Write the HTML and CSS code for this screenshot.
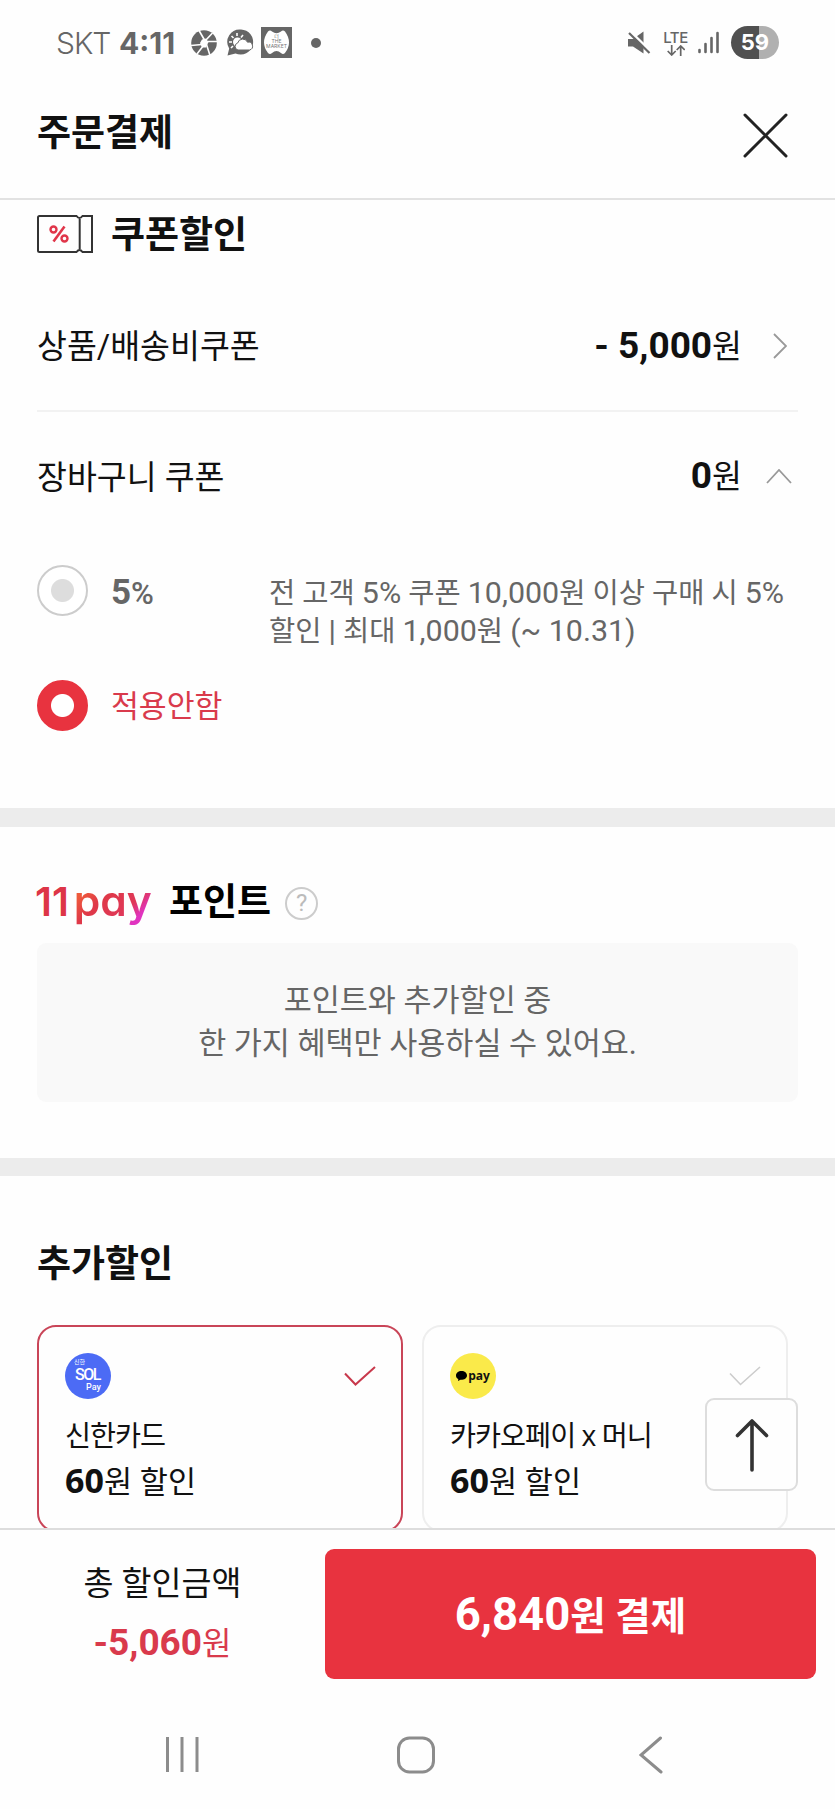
FILE: index.html
```html
<!DOCTYPE html>
<html lang="ko">
<head>
  <meta charset="UTF-8" />
  <meta name="viewport" content="width=device-width, initial-scale=1.0"/>
  <title>주문결제</title>
  <link rel="stylesheet" href="styles.css">
</head>
<body>
  <div class="screen">
    <!-- 상태바 -->
    <div class="status-bar">
      <span class="carrier">SKT</span>
      <span class="clock">4:11</span>
      <svg class="st-shutter" width="26" height="26" viewBox="0 0 26 26">
        <circle cx="13" cy="13" r="12.8" fill="#666"/>
        <g stroke="#fff" stroke-width="1.6" fill="none">
          <path d="M8 0.500L13.500 10M21.500 3L14.500 10.500M26 11.500L15 11.500M19 25.500L15.500 14.500M6 24L12.500 15.500M0 15.500L11 14.500"/>
        </g>
        <path d="M14.500 8.500L17.500 12L15 17.500L11 17.500L9 13L11 9.500Z" fill="#fff"/>
      </svg>
      <svg class="st-weather" width="27" height="27" viewBox="0 0 27 27">
        <path d="M14 0.5A12.5 12.5 0 1 1 8.5 24.4L0.5 26.5L2.2 19.5A12.5 12.5 0 0 1 14 .5Z" fill="#666"/>
        <circle cx="10.5" cy="13" r="4.5" fill="#fff"/>
        <path d="M10 4v3M4.500 7l2 2M2 13h3M16 6l-2 2.500M4 19l2-2" stroke="#fff" stroke-width="1.6"/>
        <path d="M11 21a3.600 3.600 0 0 1-.3-7a5.200 5.200 0 0 1 9.800-.8a4 4 0 0 1 2 7.800Z" fill="#fff" stroke="#666" stroke-width="1"/>
      </svg>
      <svg class="st-market" width="31" height="31" viewBox="0 0 31 31">
        <rect width="31" height="31" fill="#666"/>
        <path d="M7 4.500Q9 2.500 11 4.500Q15.500 8 20 4.500Q22 2.500 24 4.500Q32 15.500 24 26Q22 28 20 26Q15.500 22 11 26Q9 28 7 26Q-1 15.500 7 4.500Z" fill="#fff"/>
        <text x="15.500" y="10.800" class="market-text">더</text>
        <text x="15.500" y="16.200" class="market-text">THE</text>
        <text x="15.500" y="21" class="market-text">MARKET</text>
      </svg>
      <span class="dot"></span>

      <svg class="st-mute" width="24" height="24" viewBox="0 0 24 24">
        <path d="M1 8h5l10.500-7.500v22L6 15.500H1z" fill="#666"/>
        <path d="M3 0L25 21.500" stroke="#fff" stroke-width="2.500"/>
        <path d="M2 2L22.500 22" stroke="#666" stroke-width="2.200"/>
      </svg>
      <div class="lte">
        <span>LTE</span>
        <svg width="18" height="11" viewBox="0 0 18 11" fill="none" stroke="#666" stroke-width="1.700">
          <path d="M4.700 0v10M.7 6l4 4l4-4M13.700 11V1M9.700 5l4-4l4 4"/>
        </svg>
      </div>
      <svg class="st-signal" width="21" height="23" viewBox="0 0 21 23" stroke="#666" stroke-width="2.600" stroke-linecap="round">
        <path d="M1.500 19v2M7.500 13v8M13.500 7v14M19.500 2v19"/>
      </svg>
      <span class="battery">59</span>
    </div>

    <!-- 헤더 -->
    <header class="header">
      <h1>주문결제</h1>
      <svg width="45" height="45" viewBox="0 0 45 45" stroke="#222" stroke-width="3" stroke-linecap="round">
        <path d="M2 2L43 43M43 2L2 43"/>
      </svg>
    </header>

    <main class="content">
      <!-- 쿠폰할인 -->
      <section class="coupon">
        <div class="coupon-title">
          <svg width="56" height="38" viewBox="0 0 56 38" fill="none" stroke="#333" stroke-width="2">
            <path d="M2.500 1H39.500Q42.500 5 45.500 1H55V37H45.500Q42.500 33 39.500 37H2.500Q1 37 1 35.500V2.500Q1 1 2.500 1Z"/>
            <path d="M42.700 4V34"/>
            <g stroke="#e0364a" stroke-width="2.400">
              <circle cx="16.500" cy="14.500" r="3"/>
              <circle cx="27.500" cy="23.500" r="3"/>
              <path d="M27.500 11.500L16.500 26.500" stroke-width="2.600"/>
            </g>
          </svg>
          <h2>쿠폰할인</h2>
        </div>

        <div class="row">
          <span class="row-name">상품/배송비쿠폰</span>
          <span class="price"><b>- 5,000</b>원</span>
          <svg class="arrow-right" width="14" height="26" viewBox="0 0 14 26" fill="none" stroke="#999" stroke-width="1.800">
            <path d="M1 1L13 13L1 25"/>
          </svg>
        </div>
        <div class="row row-cart">
          <span class="row-name">장바구니 쿠폰</span>
          <span class="price"><b>0</b>원</span>
          <svg class="arrow-up" width="26" height="15" viewBox="0 0 26 15" fill="none" stroke="#999" stroke-width="1.800">
            <path d="M1 14L13 1L25 14"/>
          </svg>
        </div>

        <div class="option">
          <span class="radio"></span>
          <span class="rate"><b>5</b>%</span>
          <p class="desc">전 고객 <i>5%</i> 쿠폰 <i>10,000</i>원 이상 구매 시 <i>5%</i><br>할인 <i>|</i> 최대 <i>1,000</i>원 <i>(~ 10.31)</i></p>
        </div>
        <div class="option option-on">
          <span class="radio checked"></span>
          <span class="none">적용안함</span>
        </div>
      </section>

      <!-- 11pay 포인트 -->
      <section class="point">
        <div class="point-title">
          <span class="logo"><span class="eleven">11</span><span class="pay">pay</span></span>
          <h2>포인트</h2>
          <span class="help">?</span>
        </div>
        <div class="notice">포인트와 추가할인 중<br>한 가지 혜택만 사용하실 수 있어요.</div>
      </section>

      <!-- 추가할인 -->
      <section class="extra">
        <h2>추가할인</h2>
        <div class="cards">
          <div class="card selected">
            <div class="card-top">
              <span class="sol"><small>신한</small><strong>SOL</strong><em>Pay</em></span>
              <svg width="32" height="22" viewBox="0 0 32 22" fill="none" stroke="#c8394c" stroke-width="2">
                <path d="M1 8.500L11.500 19.500L31 2"/>
              </svg>
            </div>
            <div class="card-name">신한카드</div>
            <div class="card-price"><b>60</b>원 할인</div>
          </div>
          <div class="card">
            <div class="card-top">
              <span class="kakao">
                <svg width="11" height="10" viewBox="0 0 11 10"><path d="M5.500 0C2.300 0 0 2 0 4.400C0 6 .9 7.300 2.300 8L2 10L4.500 8.800C8 9 11 7.200 11 4.400C11 2 8.700 0 5.500 0Z"/></svg>pay
              </span>
              <svg width="32" height="22" viewBox="0 0 32 22" fill="none" stroke="#ccc" stroke-width="1.600">
                <path d="M1 8.500L11.500 19.500L31 2"/>
              </svg>
            </div>
            <div class="card-name">카카오페이 x 머니</div>
            <div class="card-price"><b>60</b>원 할인</div>
          </div>
        </div>
      </section>
      <div class="go-top">
        <svg width="34" height="54" viewBox="0 0 34 54" fill="none" stroke="#333" stroke-width="3.600" stroke-linecap="round" stroke-linejoin="round">
          <path d="M17 52V3M2.500 17.500L17 3L31.500 17.500"/>
        </svg>
      </div>
    </main>

    <!-- 결제 버튼 -->
    <div class="pay-bar">
      <div class="total">
        <div class="total-name">총 할인금액</div>
        <div class="total-price"><b>-5,060</b>원</div>
      </div>
      <div class="pay-button"><span>6,840</span>원 결제</div>
    </div>

    <!-- 내비게이션 바 -->
    <nav class="nav">
      <svg width="34" height="35" viewBox="0 0 34 35" stroke="#8c8c8c" stroke-width="3">
        <path d="M2.500 0V35M17 0V35M32 0V35"/>
      </svg>
      <svg class="nav-home" width="38" height="38" viewBox="0 0 38 38" fill="none" stroke="#8c8c8c" stroke-width="3">
        <rect x="1.500" y="2" width="35" height="34" rx="11"/>
      </svg>
      <svg width="24" height="38" viewBox="0 0 24 38" fill="none" stroke="#8c8c8c" stroke-width="3" stroke-linecap="round">
        <path d="M21.500 2L2 19L22 36"/>
      </svg>
    </nav>
  </div>
</body>
</html>
```
FILE: styles.css
```css
* {
  margin: 0;
  padding: 0;
  box-sizing: border-box;
}

html, body {
  width: 100%;
  height: 100%;
  background: #fefefe;
  color: #111;
  font-family: Roboto, 'Noto Sans CJK KR', sans-serif;
  overflow: hidden;
}

svg {
  display: block;
  flex-shrink: 0;
}

i {
  font-style: normal;
}

.screen {
  height: 1809px;
  display: flex;
  flex-direction: column;
}

/* 상태바 */
.status-bar {
  height: 85px;
  padding-left: 56px;
  display: flex;
  align-items: center;
  color: #666;
  line-height: 30px;
  font-family: Inter, sans-serif;
}

.carrier {
  width: 63px;
  font-size: 30px;
  font-weight: 300;
  letter-spacing: -1px;
}

.clock {
  width: 72px;
  font-size: 30px;
  font-weight: 700;
  white-space: nowrap;
}

.st-weather {
  margin-left: 10px;
}

.st-market {
  margin-left: 7px;
}

.market-text {
  font-size: 5px;
  text-anchor: middle;
  fill: #777;
  font-family: Inter, 'Noto Sans CJK KR', sans-serif;
}

.dot {
  width: 10px;
  height: 10px;
  margin-left: 19px;
  border-radius: 50%;
  background: #666;
}

.st-mute {
  margin-left: auto;
}

.lte {
  width: 27px;
  margin-left: 11px;
  display: flex;
  flex-direction: column;
  align-items: center;
}

.lte span {
  font-size: 15px;
  line-height: 15px;
  font-weight: 500;
  letter-spacing: -0.5px;
}

.st-signal {
  margin-left: 9px;
}

.battery {
  width: 48px;
  height: 33px;
  margin: 0 56px 0 12px;
  border-radius: 17px;
  background: linear-gradient(to right, #505050 59%, #b0b0b0 59%);
  color: #fff;
  font-size: 22px;
  font-weight: 700;
  line-height: 33px;
  text-align: center;
}

/* 헤더 */
.header {
  height: 115px;
  padding: 0 47px 13px 37px;
  display: flex;
  align-items: center;
  justify-content: space-between;
  border-bottom: 2px solid #e2e2e2;
}

h1, h2 {
  font-size: 37px;
  font-weight: 700;
  line-height: 44px;
}

.header h1 {
  margin-top: -2px;
}

.content {
  flex: 1;
  min-height: 0;
  overflow: hidden;
  position: relative;
}

/* 쿠폰 */
.coupon {
  height: 608px;
  padding: 12px 37px 0;
}

.coupon-title {
  height: 44px;
  display: flex;
  align-items: center;
  gap: 18px;
}

.coupon-title h2 {
  margin-top: 3px;
}

.row {
  height: 132px;
  margin-top: 24px;
  padding-top: 2px;
  display: flex;
  align-items: center;
  font-size: 32.5px;
  line-height: 40px;
  border-bottom: 2px solid #f2f2f2;
}

.row-name {
  padding-top: 2px;
}

.row-cart {
  height: 127px;
  margin-top: 0;
  border: none;
}

.price {
  margin-left: auto;
}

.price b {
  font-size: 37px;
}

.arrow-right {
  margin: 0 11px 0 31px;
}

.arrow-up {
  margin: 0 6px 0 24px;
}

.option {
  display: flex;
  margin-top: 26px;
  color: #666;
}

.option-on {
  margin-top: 30px;
  color: #d93a4c;
}

.radio {
  width: 51px;
  height: 51px;
  margin-right: 23px;
  flex-shrink: 0;
  border: 2px solid #ccc;
  border-radius: 50%;
  background: radial-gradient(circle, #ddd 11px, #fff 12px);
}

.radio.checked {
  border-color: #e8333f;
  background: radial-gradient(circle, #fff 11px, #e8333f 12px);
}

.rate {
  width: 158px;
  font-size: 31px;
  font-weight: 500;
  line-height: 56px;
}

.rate b {
  font-size: 35px;
}

.desc {
  padding-top: 9px;
  font-size: 28.5px;
  line-height: 37px;
  white-space: nowrap;
}

.desc i {
  font-size: 30.4px;
}

.none {
  font-size: 30.3px;
  line-height: 54px;
  height: 51px;
}

/* 포인트 */
.point {
  height: 368px;
  padding: 56px 37px 0;
  border-top: 19px solid #ececec;
  border-bottom: 18px solid #ececec;
}

.point-title {
  height: 40px;
  display: flex;
  align-items: center;
}

.point-title h2 {
  color: #000;
}

.logo {
  width: 132px;
  margin-top: -3px;
  font-family: Inter, sans-serif;
  font-size: 42.5px;
  font-weight: 600;
  line-height: 56px;
  font-feature-settings: 'cv11';
  white-space: nowrap;
}

.eleven {
  margin: 0 5px 0 -2px;
  color: #dd3547;
  font-size: 40px;
}

.pay {
  background: linear-gradient(135deg, #ee5a3c 20%, #df3848 40%, #df3858 68%, #e033c0 82%);
  background-clip: text;
  -webkit-background-clip: text;
  color: transparent;
}

.help {
  width: 33px;
  height: 33px;
  margin: 1px 0 0 14px;
  border: 2px solid #ccc;
  border-radius: 50%;
  color: #bbb;
  font-size: 24px;
  line-height: 29px;
  text-align: center;
}

.notice {
  height: 159px;
  margin-top: 20px;
  padding-top: 36px;
  border-radius: 9px;
  background: #f9f9f9;
  color: #666;
  font-size: 30.5px;
  line-height: 43px;
  text-align: center;
}

/* 추가할인 */
.extra {
  padding: 67px 37px 0;
}

.cards {
  display: flex;
  gap: 19px;
  margin-top: 38px;
}

.card {
  width: 366px;
  height: 207px;
  padding: 26px 25px 0 26px;
  border: 2px solid #eee;
  border-radius: 19px;
  flex-shrink: 0;
}

.card.selected {
  border-color: #c94558;
}

.card-top {
  height: 46px;
  display: flex;
  align-items: center;
  justify-content: space-between;
}

.sol {
  position: relative;
  width: 46px;
  height: 46px;
  border-radius: 50%;
  background: #4c6bf5;
  color: #fff;
}

.sol small, .sol strong, .sol em {
  position: absolute;
  font-style: normal;
  line-height: 1;
}

.sol small {
  left: 9px;
  top: 6px;
  font-size: 6px;
}

.sol strong {
  left: 10px;
  top: 14px;
  font-size: 16px;
  font-weight: 500;
  letter-spacing: -1.5px;
}

.sol em {
  left: 21px;
  top: 30px;
  font-size: 9px;
  font-weight: 500;
}

.kakao {
  width: 46px;
  height: 46px;
  display: flex;
  align-items: center;
  justify-content: center;
  gap: 1px;
  border-radius: 50%;
  background: #faea4a;
  color: #111;
  font-family: 'Open Sans', sans-serif;
  font-size: 12px;
  font-weight: 700;
  line-height: 12px;
}

.card-name {
  margin-top: 14px;
  font-family: 'Open Sans', 'Noto Sans CJK KR', sans-serif;
  font-size: 28.3px;
  line-height: 44px;
  letter-spacing: -1px;
  white-space: nowrap;
}

.card-price {
  font-family: 'Open Sans', 'Noto Sans CJK KR', sans-serif;
  font-size: 30.5px;
  line-height: 46px;
}

.card-price b {
  font-size: 34px;
}

.go-top {
  position: absolute;
  left: 705px;
  top: 1198px;
  width: 93px;
  height: 93px;
  display: flex;
  align-items: center;
  justify-content: center;
  border: 2px solid #ddd;
  border-radius: 9px;
  background: #fefefe;
}

/* 결제 */
.pay-bar {
  height: 151px;
  padding: 19px 19px 0 0;
  display: flex;
  border-top: 2px solid #ddd;
}

.total {
  width: 325px;
  text-align: center;
}

.total-name {
  padding-top: 15px;
  font-size: 32.6px;
  line-height: 40px;
}

.total-price {
  margin-top: 18px;
  color: #d93a4c;
  font-size: 32px;
  line-height: 42px;
}

.total-price b {
  font-size: 37px;
}

.pay-button {
  flex: 1;
  height: 130px;
  border-radius: 9px;
  background: #e8333f;
  color: #fff;
  font-size: 38.6px;
  font-weight: 700;
  line-height: 131px;
  text-align: center;
}

.pay-button span {
  font-size: 45.5px;
}

.nav {
  height: 130px;
  padding: 21px 172px 0 165px;
  display: flex;
  align-items: center;
  justify-content: space-between;
}

.nav-home {
  margin-right: 6px;
}
```
